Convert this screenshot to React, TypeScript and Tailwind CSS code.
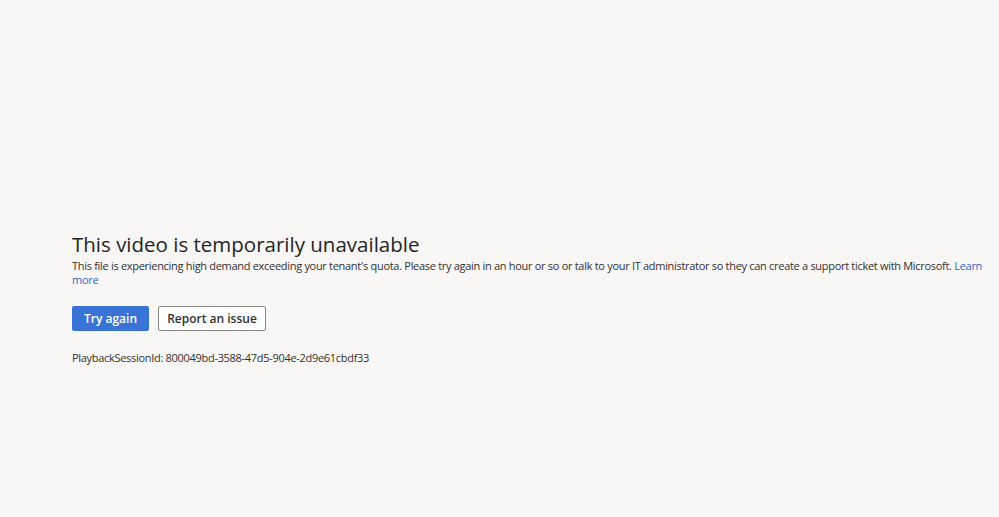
export default function App() {
	return (
		<div
			className="min-h-[517px] w-full bg-[#f8f7f6] text-[#323130]"
			style={{ fontFamily: '"Open Sans", "Noto Sans", sans-serif' }}
		>
			<div className="pl-[72px] pr-[8px] pt-[231px]">
				<h1 className="text-[20.5px] leading-[27px] font-normal text-[#252423]">
					This video is temporarily unavailable
				</h1>
				<p className="mt-[1px] text-[11px] leading-[14px] tracking-[-0.3px]">
					This file is experiencing high demand exceeding your tenant's quota.
					Please try again in an hour or so or talk to your IT administrator so
					they can create a support ticket with Microsoft.{' '}
					<a href="#" className="text-[#2f68c4]">
						Learn more
					</a>
				</p>
				<div className="mt-[19px] flex gap-[9px]">
					<button className="h-[25px] w-[77px] rounded-[2px] bg-[#3a73d6] text-[12px] font-semibold text-white">
						Try again
					</button>
					<button className="h-[25px] w-[108px] rounded-[2px] border border-[#8a8886] bg-white text-[12px] font-semibold text-[#323130]">
						Report an issue
					</button>
				</div>
				<p className="mt-[20px] text-[11px] leading-[14px] tracking-[-0.3px]">
					PlaybackSessionId: 800049bd-3588-47d5-904e-2d9e61cbdf33
				</p>
			</div>
		</div>
	);
}
